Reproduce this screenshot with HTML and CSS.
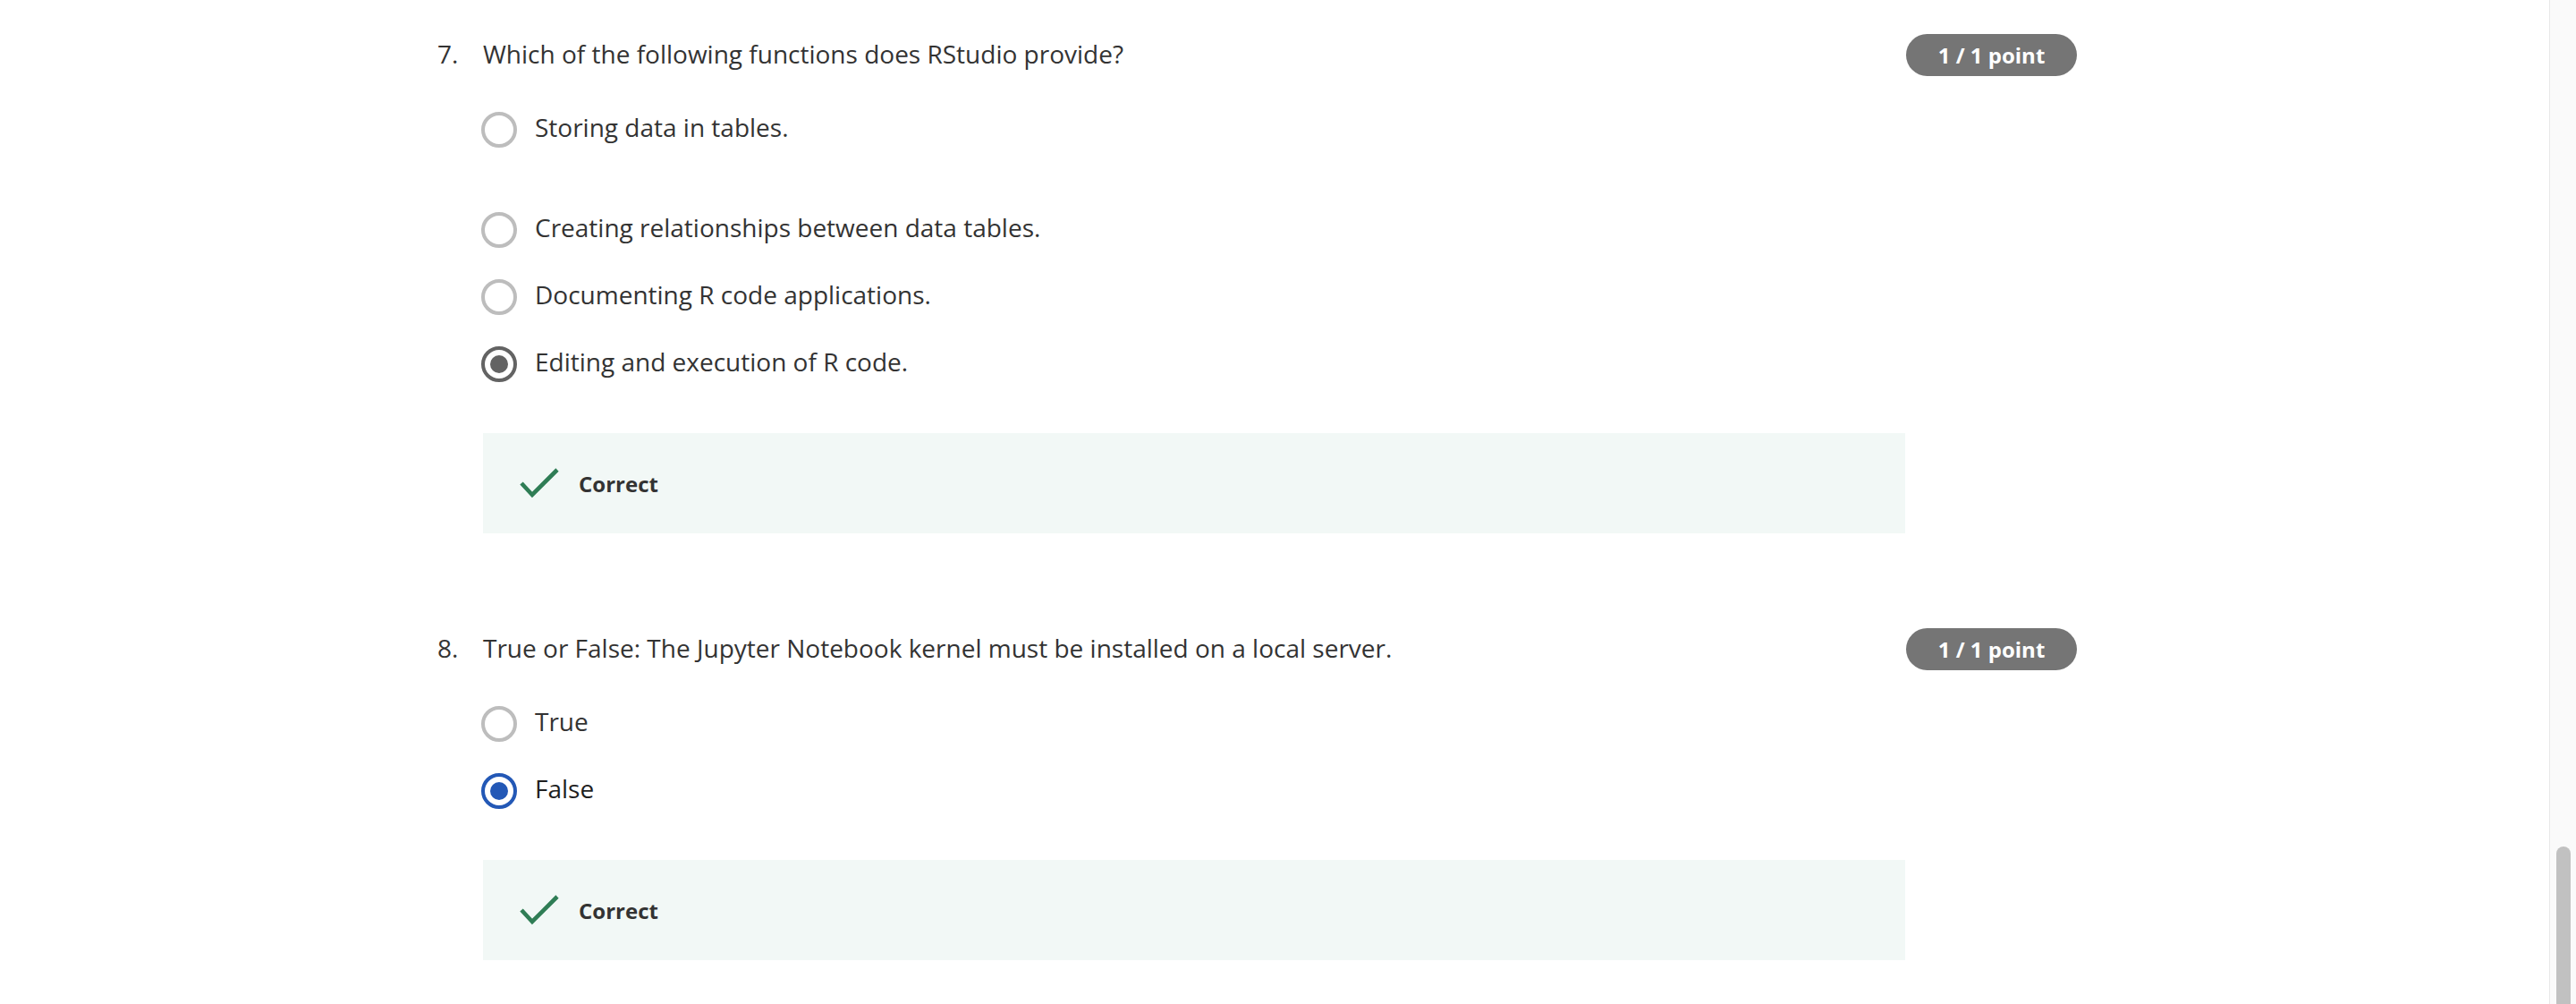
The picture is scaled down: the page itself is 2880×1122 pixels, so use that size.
FILE: index.html
```html
<!DOCTYPE html>
<html lang="en">
<head>
<meta charset="utf-8">
<title>Quiz results</title>
<link rel="stylesheet" href="styles.css">
</head>
<body>
<main class="page">
  <section class="question q7">
    <div class="q-head">
      <span class="q-num">7.</span>
      <span class="q-text">Which of the following functions does RStudio provide?</span>
      <span class="badge">1 / 1 point</span>
    </div>
    <div class="q-body">
      <ul class="options">
        <li class="option first"><span class="radio"></span><span class="opt-text">Storing data in tables.</span></li>
        <li class="option"><span class="radio"></span><span class="opt-text">Creating relationships between data tables.</span></li>
        <li class="option"><span class="radio"></span><span class="opt-text">Documenting R code applications.</span></li>
        <li class="option"><span class="radio checked-gray"></span><span class="opt-text">Editing and execution of R code.</span></li>
      </ul>
      <div class="feedback">
        <svg class="check" viewBox="0 0 44 34" width="44" height="34" aria-hidden="true"><polyline points="2,17 14,30 42,2" fill="none" stroke="#2f7d55" stroke-width="4.6"/></svg>
        <span class="feedback-text">Correct</span>
      </div>
    </div>
  </section>

  <section class="question q8">
    <div class="q-head">
      <span class="q-num">8.</span>
      <span class="q-text">True or False: The Jupyter Notebook kernel must be installed on a local server.</span>
      <span class="badge">1 / 1 point</span>
    </div>
    <div class="q-body">
      <ul class="options">
        <li class="option"><span class="radio"></span><span class="opt-text">True</span></li>
        <li class="option"><span class="radio checked-blue"></span><span class="opt-text selected">False</span></li>
      </ul>
      <div class="feedback">
        <svg class="check" viewBox="0 0 44 34" width="44" height="34" aria-hidden="true"><polyline points="2,17 14,30 42,2" fill="none" stroke="#2f7d55" stroke-width="4.6"/></svg>
        <span class="feedback-text">Correct</span>
      </div>
    </div>
  </section>
</main>
<div class="scrollbar"><div class="thumb"></div></div>
</body>
</html>
```
FILE: styles.css
```css
html, body {
  margin: 0;
  padding: 0;
  background: #ffffff;
  height: 100%;
  overflow: hidden;
}

body {
  font-family: "Open Sans", "Noto Sans", sans-serif;
  color: #333333;
}

.page {
  margin-left: 489px;
  width: 1833px;
  padding-top: 38px;
}

.question + .question {
  margin-top: 106px;
}

.q-head {
  display: grid;
  grid-template-columns: 51px 1591px 191px;
  align-items: center;
  height: 47px;
  font-size: 28px;
  color: #333333;
}

.q-num,
.q-text {
  line-height: 1;
  margin-bottom: 4px;
}

.badge {
  display: flex;
  align-items: center;
  justify-content: center;
  height: 47px;
  width: 191px;
  border-radius: 24px;
  background: #757575;
  color: #ffffff;
  font-weight: 700;
  font-size: 24px;
}

.q-body {
  margin-left: 51px;
  width: 1590px;
}

.options {
  list-style: none;
  margin: 40px 0 0 -2px;
  padding: 0;
  display: flex;
  flex-direction: column;
  gap: 35px;
}

.option {
  display: flex;
  align-items: flex-start;
  gap: 20px;
  height: 40px;
  font-size: 28px;
}

.option.first {
  margin-bottom: 37px;
}

.radio {
  box-sizing: border-box;
  width: 40px;
  height: 40px;
  border-radius: 50%;
  border: 4px solid #bdbdbd;
  background: #ffffff;
  display: flex;
  align-items: center;
  justify-content: center;
  flex: none;
}

.radio.checked-gray {
  border-color: #636363;
}

.radio.checked-gray::after,
.radio.checked-blue::after {
  content: "";
  width: 20px;
  height: 20px;
  border-radius: 50%;
  background: #636363;
}

.radio.checked-blue {
  border-color: #2358b6;
}

.radio.checked-blue::after {
  background: #2358b6;
}

.opt-text {
  line-height: 35px;
  color: #333333;
}

.opt-text.selected {
  color: #1f1f1f;
}

.feedback {
  margin-top: 57px;
  height: 112px;
  background: #f2f8f6;
  display: flex;
  align-items: center;
  gap: 22px;
  padding-left: 41px;
}

.check {
  flex: none;
}

.feedback-text {
  font-weight: 700;
  font-size: 24px;
  color: #333333;
}

.scrollbar {
  position: fixed;
  top: 0;
  right: 0;
  width: 29px;
  height: 100%;
  background: #fafafa;
  border-left: 1px solid #e8e8e8;
}

.thumb {
  position: absolute;
  top: 946px;
  left: 7px;
  width: 16px;
  height: 200px;
  border-radius: 8px;
  background: #c1c1c1;
}
```
